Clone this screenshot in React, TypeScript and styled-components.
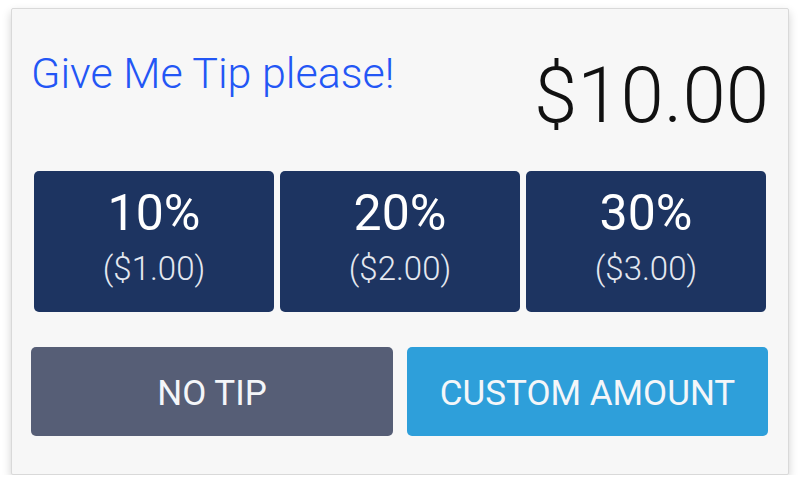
import styled, { createGlobalStyle } from "styled-components";

const GlobalStyle = createGlobalStyle`
	html, body {
		margin: 0;
		padding: 0;
		background: #ffffff;
		font-family: Roboto, "Liberation Sans", sans-serif;
	}
`

const tips = [
	{ pct: 10, amount: "$1.00" },
	{ pct: 20, amount: "$2.00" },
	{ pct: 30, amount: "$3.00" },
]

export default function App() {
	return (
		<>
			<GlobalStyle />
			<Card>
				<Header>
					<Title>Give Me Tip please!</Title>
					<Total>$10.00</Total>
				</Header>
				<TipRow>
					{tips.map((tip) => (
						<TipButton key={tip.pct}>
							<Percent>{tip.pct}%</Percent>
							<Amount>({tip.amount})</Amount>
						</TipButton>
					))}
				</TipRow>
				<ActionRow>
					<ActionButton $variant="muted">NO TIP</ActionButton>
					<ActionButton $variant="primary">CUSTOM AMOUNT</ActionButton>
				</ActionRow>
			</Card>
		</>
	)
}

const Card = styled.div`
	box-sizing: border-box;
	width: 778px;
	height: 467px;
	margin: 8px 0 0 11px;
	padding: 0 19px;
	background: #f7f7f7;
	border: 1px solid #d9d9d9;
	border-radius: 2px;
	box-shadow: 0 4px 10px rgba(0, 0, 0, 0.18);
	display: flex;
	flex-direction: column;
`

const Header = styled.div`
	height: 162px;
	box-sizing: border-box;
	padding-top: 43px;
	display: flex;
	justify-content: space-between;
	align-items: flex-start;
`

const Title = styled.div`
	font-size: 43px;
	font-weight: 300;
	line-height: 1;
	color: #2356f5;
`

const Total = styled.div`
	margin-top: 5px;
	font-size: 78px;
	font-weight: 300;
	line-height: 1;
	color: #111111;
`

const TipRow = styled.div`
	display: grid;
	grid-template-columns: repeat(3, 1fr);
	gap: 6px;
	margin: 0 3px;
`

const TipButton = styled.button`
	height: 141px;
	box-sizing: border-box;
	padding: 17px 0 0;
	border: none;
	border-radius: 5px;
	background: #1d3461;
	color: #ffffff;
	font-family: inherit;
	cursor: pointer;
	display: flex;
	flex-direction: column;
	align-items: center;
	gap: 14px;
`

const Percent = styled.span`
	font-size: 50px;
	font-weight: 400;
	line-height: 1;
`

const Amount = styled.span`
	font-size: 33px;
	font-weight: 300;
	line-height: 1;
	color: #e4e8f0;
`

const ActionRow = styled.div`
	display: grid;
	grid-template-columns: 362px 361px;
	gap: 14px;
	margin-top: 35px;
`

const ActionButton = styled.button<{ $variant: "muted" | "primary" }>`
	height: 89px;
	box-sizing: border-box;
	padding-top: 5px;
	border: none;
	border-radius: 5px;
	background: ${(p) => (p.$variant === "primary" ? "#2e9fda" : "#565e76")};
	color: #f4f6f9;
	font-family: inherit;
	font-size: 35px;
	font-weight: 400;
	cursor: pointer;
	display: flex;
	align-items: center;
	justify-content: center;
`
